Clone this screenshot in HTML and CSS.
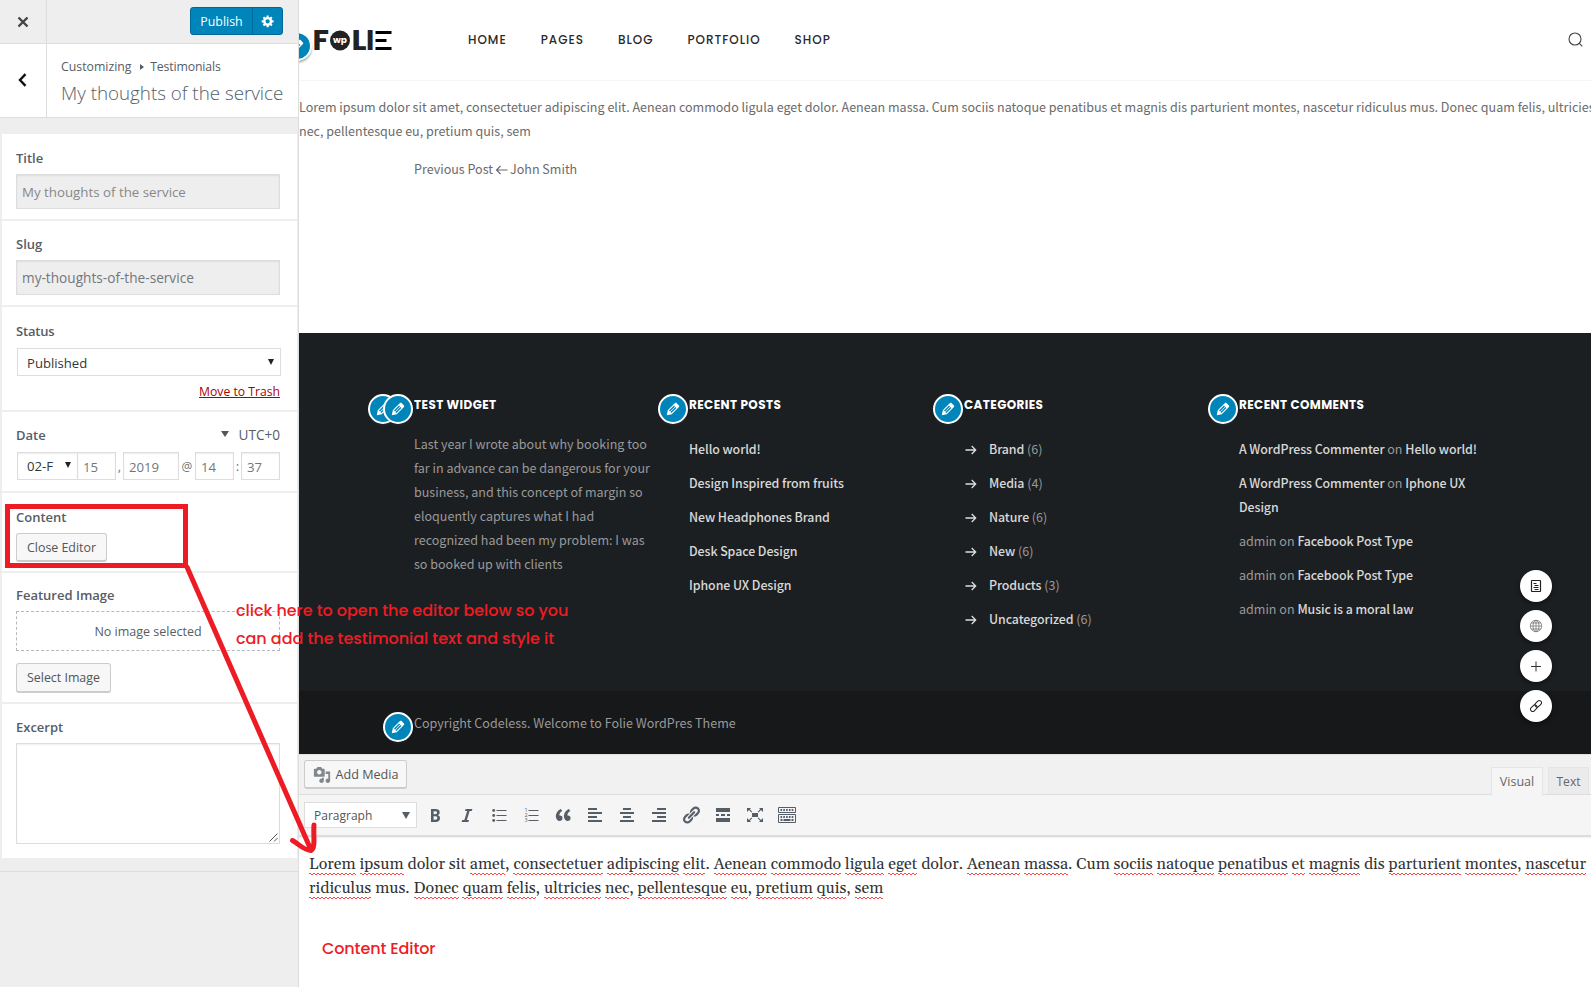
FILE: index.html
```html
<!DOCTYPE html>
<html lang="en">
<head>
<meta charset="utf-8">
<title>Customize: My thoughts of the service</title>
<link rel="stylesheet" href="styles.css">
</head>
<body>
<svg class="defs" width="0" height="0">
  <symbol id="pencil" viewBox="0 0 20 20"><path d="M13.89 3.39l2.71 2.72c.46.46.42 1.24.03 1.64l-8.01 8.02-5.56 1.16 1.16-5.58s7.6-7.63 7.99-8.03c.39-.39 1.22-.39 1.68.07zm-2.73 2.79l-5.59 5.61 1.11 1.11 5.54-5.65zm-2.97 8.23l5.58-5.6-1.07-1.08-5.59 5.6z"/></symbol>
  <symbol id="arrow" viewBox="0 0 12 10"><path d="M.5 5h10.2M6.7 1l4 4-4 4" fill="none" stroke="currentColor" stroke-width="1.3"/></symbol>
</svg>

<aside class="sidebar">
  <div class="topbar">
    <div class="close"><svg width="12" height="12" viewBox="0 0 12 12"><path d="M1.5 1.5l9 9M10.5 1.5l-9 9" stroke="#444" stroke-width="2.4"/></svg></div>
    <div class="publish"><span class="publish-label">Publish</span><span class="publish-cog"><svg width="14" height="14" viewBox="0 0 20 20" fill="#fff"><path fill-rule="evenodd" d="M18 12h-2.18c-.17.7-.44 1.35-.81 1.93l1.54 1.54-2.1 2.1-1.54-1.54c-.58.36-1.23.63-1.91.79V19H8v-2.18c-.68-.16-1.33-.43-1.91-.79l-1.54 1.54-2.12-2.12 1.54-1.54c-.36-.58-.63-1.23-.79-1.91H1V9.03h2.17c.16-.7.44-1.35.8-1.94L2.43 5.55l2.1-2.1 1.54 1.54c.58-.37 1.24-.64 1.93-.81V2h3v2.18c.68.16 1.33.43 1.91.79l1.54-1.54 2.12 2.12-1.54 1.54c.36.59.64 1.24.8 1.94H18V12zm-8.5 1.5c1.66 0 3-1.34 3-3s-1.34-3-3-3-3 1.34-3 3 1.34 3 3 3z"/></svg></span></div>
  </div>
  <div class="crumbs">
    <div class="back"><svg width="9" height="14" viewBox="0 0 9 14"><path d="M7.5 1.2L2 7l5.5 5.8" fill="none" stroke="#111" stroke-width="2.4"/></svg></div>
    <div class="crumb-text">
      <div class="path"><span>Customizing</span><i class="tri"></i><span class="t2">Testimonials</span></div>
      <div class="heading">My thoughts of the service</div>
    </div>
  </div>
  <div class="cards">
    <section class="card c-title"><label>Title</label><div class="field filled">My thoughts of the service</div></section>
    <section class="card c-slug"><label>Slug</label><div class="field filled slug">my-thoughts-of-the-service</div></section>
    <section class="card c-status"><label class="status">Status</label><div class="select"><span>Published</span><i class="caret"></i></div><div class="trash"><a>Move to Trash</a></div></section>
    <section class="card c-date">
      <div class="date-head"><label>Date</label><span class="utc"><i class="caret grey"></i>UTC+0</span></div>
      <div class="date-row"><span class="box mon">02-F<i class="caret"></i></span><span class="box day">15</span><span class="sep s1">,</span><span class="box year">2019</span><span class="sep s2">@</span><span class="box hh">14</span><span class="sep s3">:</span><span class="box hh">37</span></div>
    </section>
    <section class="card c-content"><label>Content</label><span class="btn b-close">Close Editor</span></section>
    <section class="card c-image"><label>Featured Image</label><div class="noimg">No image selected</div><span class="btn b-select">Select Image</span></section>
    <section class="card c-excerpt"><label>Excerpt</label><div class="area"><svg width="9" height="9" viewBox="0 0 9 9"><path d="M.5 8.5l8-8M5 8.5l3.5-3.5" stroke="#555" stroke-width="1"/></svg></div></section>
  </div>
  <div class="side-rest"></div>
</aside>

<main class="main">
  <header class="site-head">
    <span class="badge bd-logo"><svg><use href="#pencil"/></svg></span>
    <svg class="logo" width="80" height="22" viewBox="0 0 80 22">
      <g class="logo-text"><text x="-.5" y="20.3" textLength="16.500" lengthAdjust="spacingAndGlyphs">F</text><text x="38.5" y="20.3" textLength="15" lengthAdjust="spacingAndGlyphs">L</text><text x="53" y="20.3">I</text></g>
      <circle cx="27" cy="10.5" r="10" fill="#222"/>
      <text class="logo-wp" x="27" y="13.2" text-anchor="middle">wp</text>
      <path d="M62.500 .9h16v3h-16zM62.500 8.900h11v3h-11zM62.500 17h16v3h-16z" fill="#000"/>
    </svg>
    <nav class="nav"><a>HOME</a><a>PAGES</a><a>BLOG</a><a>PORTFOLIO</a><a>SHOP</a></nav>
    <svg class="search" width="15" height="15" viewBox="0 0 15 15"><circle cx="7" cy="7" r="6" fill="none" stroke="#444" stroke-width="1.100"/><path d="M11.300 11.300l3 3" stroke="#444" stroke-width="1.100"/></svg>
  </header>
  <article class="post">
    <p>Lorem ipsum dolor sit amet, consectetuer adipiscing elit. Aenean commodo ligula eget dolor. Aenean massa. Cum sociis natoque penatibus et magnis dis parturient montes, nascetur ridiculus mus. Donec quam felis, ultricies<br>nec, pellentesque eu, pretium quis, sem</p>
    <div class="prev"><span>Previous Post</span><svg width="13" height="10" viewBox="0 0 13 10"><path d="M12.500 5H1.500M5.500 1l-4 4 4 4" fill="none" stroke="#666" stroke-width="1.100"/></svg><span>John Smith</span></div>
  </article>

  <footer class="foot">
    <div class="col col1">
      <span class="badge b-a"><svg><use href="#pencil"/></svg></span><span class="badge b-b"><svg><use href="#pencil"/></svg></span>
      <h4>TEST WIDGET</h4>
      <p>Last year I wrote about why booking too<br>far in advance can be dangerous for your<br>business, and this concept of margin so<br>eloquently captures what I had<br>recognized had been my problem: I was<br>so booked up with clients</p>
    </div>
    <div class="col col2">
      <span class="badge b-b"><svg><use href="#pencil"/></svg></span>
      <h4>RECENT POSTS</h4>
      <ul><li><b>Hello world!</b></li><li><b>Design Inspired from fruits</b></li><li><b>New Headphones Brand</b></li><li><b>Desk Space Design</b></li><li><b>Iphone UX Design</b></li></ul>
    </div>
    <div class="col col3">
      <span class="badge b-b"><svg><use href="#pencil"/></svg></span>
      <h4>CATEGORIES</h4>
      <ul><li><svg class="ar"><use href="#arrow"/></svg><b>Brand</b> (6)</li><li><svg class="ar"><use href="#arrow"/></svg><b>Media</b> (4)</li><li><svg class="ar"><use href="#arrow"/></svg><b>Nature</b> (6)</li><li><svg class="ar"><use href="#arrow"/></svg><b>New</b> (6)</li><li><svg class="ar"><use href="#arrow"/></svg><b>Products</b> (3)</li><li><svg class="ar"><use href="#arrow"/></svg><b>Uncategorized</b> (6)</li></ul>
    </div>
    <div class="col col4">
      <span class="badge b-b"><svg><use href="#pencil"/></svg></span>
      <h4>RECENT COMMENTS</h4>
      <ul><li><b>A WordPress Commenter</b> on <b>Hello world!</b></li><li><b>A WordPress Commenter</b> on <b>Iphone UX<br>Design</b></li><li>admin on <b>Facebook Post Type</b></li><li>admin on <b>Facebook Post Type</b></li><li>admin on <b>Music is a moral law</b></li></ul>
    </div>
  </footer>
  <div class="copy"><span class="badge b-c"><svg><use href="#pencil"/></svg></span>Copyright Codeless. Welcome to Folie WordPres Theme</div>

  <div class="fabs">
    <span class="fab"><svg width="12" height="14" viewBox="0 0 12 14" fill="none" stroke="#222"><rect x="1.500" y="1.500" width="9" height="11" rx=".5" stroke-width="1.200"/><path d="M3.500 4.500h3M4.500 6.500h4M3.500 8.500h5M4.500 10.500h4"/></svg></span>
    <span class="fab"><svg width="14" height="14" viewBox="0 0 14 14" fill="none" stroke="#777" stroke-width=".8"><circle cx="7" cy="7" r="5.700"/><ellipse cx="7" cy="7" rx="3" ry="5.700"/><path d="M7 1.300v11.400M1.300 7h11.400M2 4h10M2 10h10"/></svg></span>
    <span class="fab"><svg width="12" height="12" viewBox="0 0 12 12"><path d="M1 6.500h10M6 1.500v10" stroke="#333"/></svg></span>
    <span class="fab"><svg width="14" height="14" viewBox="0 0 14 14" fill="none" stroke="#222" stroke-width="1"><rect x="-3.700" y="-2.200" width="7.400" height="4.400" rx="2.200" transform="translate(9.200 4.800) rotate(-45)"/><rect x="-3.700" y="-2.200" width="7.400" height="4.400" rx="2.200" transform="translate(4.800 9.200) rotate(-45)"/></svg></span>
  </div>

  <section class="editor">
    <div class="ed-top">
      <span class="btn media"><svg width="18" height="18" viewBox="0 0 20 20" fill="#82878c"><path fill-rule="evenodd" d="M13 11V4c0-.55-.45-1-1-1h-1.670L9 1H5L3.670 3H2c-.55 0-1 .45-1 1v7c0 .55.45 1 1 1h10c.55 0 1-.45 1-1zM7 4.500c1.380 0 2.500 1.120 2.500 2.500S8.380 9.500 7 9.500 4.500 8.380 4.500 7 5.620 4.500 7 4.500zM14 6h5v10.500c0 1.380-1.120 2.500-2.500 2.500S14 17.880 14 16.500s1.120-2.500 2.500-2.500c.17 0 .34.02.5.05V9h-3V6zm-4 8.050V13h2v3.500c0 1.380-1.120 2.500-2.500 2.500S7 17.880 7 16.500 8.120 14 9.500 14c.17 0 .34.02.5.05z"/></svg>Add Media</span>
      <div class="tabs"><span class="tab on">Visual</span><span class="tab">Text</span></div>
    </div>
    <div class="toolbar">
      <span class="para">Paragraph<i class="caret big"></i></span>
      <div class="tools">
        <svg viewBox="0 0 20 20"><path fill-rule="evenodd" d="M6 4v13h4.540c1.370 0 2.460-.33 3.260-1 .8-.66 1.200-1.580 1.200-2.770 0-.84-.17-1.510-.51-2.010s-.9-.85-1.670-1.030v-.09c.57-.1 1.020-.4 1.360-.9s.51-1.130.51-1.910c0-1.140-.39-1.980-1.170-2.500C12.750 4.260 11.500 4 9.780 4H6zm2.570 5.150V6.260h1.360c.73 0 1.270.11 1.610.32.34.22.51.58.51 1.070 0 .54-.16.92-.47 1.150s-.82.35-1.510.35h-1.500zm0 2.190h1.600c1.440 0 2.160.53 2.160 1.610 0 .6-.17 1.050-.51 1.340s-.86.43-1.570.43H8.570v-3.380z"/></svg>
        <svg viewBox="0 0 20 20"><path d="M14.780 6h-2.130l-2.800 9h2.120l-.62 2H4.600l.62-2h2.140l2.800-9H8.030l.62-2h6.750z"/></svg>
        <svg viewBox="0 0 20 20"><path d="M7.500 5h10v1h-10zM7.500 10h10v1h-10zM7.500 15h10v1h-10z"/><circle cx="4.700" cy="5.500" r="1.400"/><circle cx="4.700" cy="10.500" r="1.400"/><circle cx="4.700" cy="15.500" r="1.400"/></svg>
        <svg viewBox="0 0 20 20"><path d="M7.500 5h10v1h-10zM7.500 10h10v1h-10zM7.500 15h10v1h-10z"/><g class="nums"><text x="3.500" y="7">1</text><text x="3.500" y="12">2</text><text x="3.500" y="17.200">3</text></g></svg>
        <svg viewBox="0 0 20 20"><path d="M9.490 13.220c0-.74-.2-1.380-.61-1.900-.62-.78-1.830-.88-2.530-.72-.29-1.650 1.110-3.750 2.920-4.650L7.880 4c-2.730 1.300-5.420 4.280-4.960 8.050C3.210 14.430 4.590 16 6.540 16c.85 0 1.560-.25 2.120-.75s.83-1.180.83-2.030zm8.050 0c0-.74-.2-1.380-.61-1.900-.63-.78-1.830-.88-2.530-.72-.29-1.650 1.110-3.750 2.920-4.650L15.930 4c-2.730 1.300-5.410 4.280-4.950 8.050.29 2.380 1.660 3.950 3.610 3.950.85 0 1.560-.25 2.120-.75s.83-1.180.83-2.030z"/></svg>
        <svg viewBox="0 0 20 20"><path d="M12 5V3H3v2h9zm5 4V7H3v2h14zm-5 4v-2H3v2h9zm5 4v-2H3v2h14z"/></svg>
        <svg viewBox="0 0 20 20"><path d="M14 5V3H6v2h8zm3 4V7H3v2h14zm-3 4v-2H6v2h8zm3 4v-2H3v2h14z"/></svg>
        <svg viewBox="0 0 20 20"><path d="M17 5V3H8v2h9zm0 4V7H3v2h14zm0 4v-2H8v2h9zm0 4v-2H3v2h14z"/></svg>
        <svg viewBox="0 0 20 20"><path d="M17.740 2.760c1.680 1.690 1.680 4.410 0 6.100l-1.530 1.520c-1.120 1.120-2.700 1.470-4.140 1.090l2.620-2.610.76-.77.76-.76c.84-.84.84-2.200 0-3.040-.84-.85-2.200-.85-3.040 0l-.77.76-3.380 3.380c-.37-1.440-.02-3.020 1.100-4.140l1.520-1.530c1.690-1.680 4.420-1.680 6.100 0zM8.590 13.430l5.340-5.340c.42-.42.42-1.100 0-1.520-.44-.43-1.130-.39-1.530 0l-5.330 5.340c-.42.42-.42 1.100 0 1.520.44.43 1.130.39 1.520 0zm-.76 2.290l4.140-4.150c.38 1.440.03 3.020-1.090 4.140l-1.520 1.530c-1.690 1.680-4.410 1.680-6.100 0-1.680-1.680-1.680-4.420 0-6.100l1.530-1.520c1.120-1.120 2.700-1.470 4.140-1.100l-4.140 4.150c-.85.84-.85 2.200 0 3.050.84.84 2.200.84 3.040 0z"/></svg>
        <svg viewBox="0 0 20 20"><path d="M17 7V3H3v4h14zM6 11V9H3v2h3zm6 0V9H8v2h4zm5 0V9h-3v2h3zm0 6v-4H3v4h14z"/></svg>
        <svg viewBox="0 0 20 20"><path d="M7 8h6v4H7zM2 3h4L4.800 4.200 7.300 6.700l-.8.8L4 5 2 7zM18 3v4l-2-2-2.500 2.500-.8-.8 2.500-2.500L14 3zM2 17v-4l2 2 2.500-2.500.8.8-2.500 2.500L6 17zM18 17h-4l1.200-1.200-2.500-2.500.8-.8L16 15l2-2z"/></svg>
        <svg viewBox="0 0 20 20"><path d="M1.500 2.500h17v5h-17zM1.500 9.500h17v8h-17z" fill="none" stroke="#555d66"/><path d="M3.500 5h13M3.500 12h13" fill="none" stroke="#555d66" stroke-width="2" stroke-dasharray="1.600 1.200"/><path d="M3.500 15h2M6.500 15h7M14.500 15h2" stroke="#555d66" stroke-width="2"/></svg>
      </div>
    </div>
    <div class="ed-body">
      <p><u>Lorem</u> <u>ipsum</u> dolor sit <u>amet</u>, <u>consectetuer</u> <u>adipiscing</u> <u>elit</u>. <u>Aenean</u> <u>commodo</u> <u>ligula</u> <u>eget</u> dolor. <u>Aenean</u> <u>massa</u>. Cum <u>sociis</u> <u>natoque</u> <u>penatibus</u> <u>et</u> <u>magnis</u> dis <u>parturient</u> <u>montes</u>, <u>nascetur</u><br><u>ridiculus</u> mus. <u>Donec</u> <u>quam</u> <u>felis</u>, <u>ultricies</u> <u>nec</u>, <u>pellentesque</u> <u>eu</u>, <u>pretium</u> <u>quis</u>, <u>sem</u></p>
      <div class="note-editor">Content Editor</div>
    </div>
  </section>
</main>

<div class="annot">click here to open the editor below so you<br>can add the testimonial text and style it</div>
<svg class="marks" width="330" height="360" viewBox="0 0 330 360" fill="none" stroke="#ed1c24" stroke-width="5">
  <rect x="7.500" y="6.500" width="178" height="59"/>
  <path d="M187 67L311 350M292.500 340.500C299 344 303 350 311 350.500C316 348 313 335 314 325" stroke-linecap="round"/>
</svg>
</body>
</html>
```
FILE: styles.css
```css
* { box-sizing: border-box; }
body { margin: 0; width: 1591px; height: 987px; overflow: hidden; display: flex; position: relative; background: #fff; font: 12.2px/16px "Open Sans", sans-serif; color: #555d66; }
.defs { position: absolute; }
i { display: inline-block; }

.sidebar { width: 299px; height: 987px; flex: none; background: #eee; border-right: 1px solid #ddd; display: flex; flex-direction: column; }
.topbar { height: 44px; border-bottom: 1px solid #ddd; display: flex; justify-content: space-between; padding-right: 15px; }
.close { width: 47px; border-right: 1px solid #ddd; display: flex; align-items: center; justify-content: center; padding-right: 1px; }
.publish { margin-top: 7px; width: 93px; height: 28px; display: flex; background: #0085ba; border: 1px solid #006799; border-radius: 3px; color: #fff; }
.publish-label { width: 62px; line-height: 28px; text-align: center; border-right: 1px solid #006799; font-size: 12.400px; }
.publish-cog { flex: 1; display: flex; align-items: center; justify-content: center; }
.crumbs { height: 74px; background: #fff; border-bottom: 1px solid #ddd; display: flex; }
.back { width: 47px; border-right: 1px solid #ddd; display: flex; align-items: center; justify-content: center; padding: 0 1px 1px 0; }
.crumb-text { padding: 14px 0 0 14px; white-space: nowrap; }
.path { display: flex; align-items: center; line-height: 18px; font-size: 12.300px; }
.path .t2 { letter-spacing: -.15px; }
.tri { border: 3px solid transparent; border-left: 4.500px solid #555d66; border-right: 0; margin: 0 6.700px 0 8px; }
.heading { font-size: 18.780px; font-weight: 300; line-height: 26px; margin-top: 4px; }

.cards { margin: 16px 1px 0 2px; display: flex; flex-direction: column; gap: 2px; }
.card { background: #fff; padding: 0 16px 0 14px; display: flex; flex-direction: column; align-items: flex-start; }
.card label { font-size: 13px; font-weight: 600; line-height: 20px; }
.status { letter-spacing: -.2px; }
.c-title { height: 85px; padding-top: 14px; }
.c-slug { height: 84px; padding-top: 13px; }
.c-status { height: 103px; padding-top: 14px; }
.c-date { height: 79px; padding-top: 13px; }
.c-content { height: 78px; padding-top: 14px; }
.c-image { height: 129px; padding-top: 12px; }
.c-excerpt { height: 154px; padding-top: 13px; }
.field { width: 264px; height: 35px; margin-top: 6px; border: 1px solid #ddd; line-height: 34px; padding-left: 5px; font-size: 13.300px; box-shadow: inset 0 1px 2px rgba(0,0,0,.07); }
.filled { background: #eee; color: #888; }
.slug { font-size: 13.650px; color: #72777c; }
.select { width: 264px; height: 28px; margin: 7px 0 0 1px; border: 1px solid #ddd; display: flex; align-items: center; justify-content: space-between; padding: 2px 6px 0 9px; font-size: 13.100px; color: #32373c; }
.caret { border: 3.500px solid transparent; border-top: 6px solid #222; border-bottom: 0; position: relative; top: -1px; }
.caret.grey { border-width: 6px 4px 0; border-top-color: #555; margin-right: 9px; top: -3px; }
.caret.big { border-width: 7px 4.500px 0; border-top-color: #555d66; top: 0; }
.trash { width: 264px; text-align: right; margin-top: 7px; line-height: 18px; color: #a00; text-decoration: underline; }
.date-head { width: 264px; display: flex; justify-content: space-between; line-height: 20px; }
.utc { font-size: 13.600px; }
.date-row { display: flex; margin: 7px 0 0 1px; height: 28px; font-size: 13.200px; line-height: 29px; color: #72777c; white-space: nowrap; }
.box { border: 1px solid #ddd; padding-left: 5px; box-shadow: inset 0 1px 2px rgba(0,0,0,.07); }
.mon { width: 60px; padding: 0 6px 0 9px; color: #32373c; display: flex; align-items: center; justify-content: space-between; border-right: 0; }
.day { width: 39px; }
.year { width: 56px; }
.hh { width: 39px; }
.sep { text-align: center; }
.s1 { width: 7px; } .s2 { width: 16px; font-size: 12px; } .s3 { width: 7px; }
.btn { height: 28px; border: 1px solid #ccc; border-bottom-width: 2px; border-radius: 3px; background: #f7f7f7; color: #555; line-height: 27px; text-align: center; font-size: 12.400px; }
.b-close { width: 91px; margin-top: 6px; height: 29px; }
.b-select { width: 95px; margin-top: 12px; height: 30px; }
.noimg { width: 264px; height: 40px; margin-top: 6px; border: 1px dashed #b4b9be; text-align: center; line-height: 40px; font-size: 12.500px; }
.area { width: 264px; height: 101px; margin-top: 6px; border: 1px solid #ddd; box-shadow: inset 0 1px 2px rgba(0,0,0,.07); display: flex; align-items: flex-end; justify-content: flex-end; padding: 1px; }
.side-rest { margin-top: 13px; border-top: 1px solid #ddd; flex: 1; }

.main { width: 1292px; flex: none; height: 987px; position: relative; overflow: hidden; display: flex; flex-direction: column; font-family: "Noto Sans CJK SC", sans-serif; font-size: 12.540px; color: #6b6b6b; }
.site-head { height: 81px; border-bottom: 1px solid #f6f6f6; display: flex; align-items: center; position: relative; flex: none; }
.logo { margin: 1px 0 0 14px; overflow: visible; }
.logo-text { font: 700 28px Poppins, sans-serif; fill: #222; }
.logo-wp { font: 700 9px Poppins, sans-serif; fill: #fff; }
.nav { display: flex; gap: 34px; margin-left: 75px; font: 500 12px/20px Poppins, sans-serif; letter-spacing: .98px; color: #2a2a2a; }
.search { margin: 0 8px 1px auto; }
.post { height: 252px; flex: none; white-space: nowrap; line-height: 24px; padding-top: 14px; }
.post p { margin: 0; }
.prev { margin: 14px 0 0 115px; display: flex; align-items: center; gap: 2px; line-height: 24px; }
.prev svg { position: relative; top: 1px; }

.badge { position: absolute; width: 30px; height: 30px; border: 2px solid #fff; border-radius: 50%; background: #0085ba; color: #fff; display: flex; align-items: center; justify-content: center; box-shadow: 0 2px 1px rgba(46,68,83,.15); }
.badge svg { width: 18px; height: 18px; fill: #fff; }
.bd-logo { left: -17px; top: 31px; box-shadow: 0 2px 2px rgba(46,68,83,.4); }
.b-b { left: -31px; top: 61px; }
.b-a { left: -46px; top: 61px; }
.b-c { left: 84px; top: 21px; }

.foot { height: 358px; flex: none; background: #1c1f22; display: grid; grid-template-columns: 275px 275px 275px 1fr; padding-left: 115px; color: #999; }
.col { position: relative; white-space: nowrap; line-height: 24px; }
.col h4 { margin: 62px 0 0; font: 700 12px/20px Poppins, sans-serif; letter-spacing: .4px; color: #fff; }
.col p { margin: 17px 0 0; }
.col ul { list-style: none; margin: 22px 0 0; padding: 0; }
.col li { margin-bottom: 10px; }
.col b { font-weight: 500; color: #d8d8d8; letter-spacing: -.08px; font-size: 12.400px; }
.ar { width: 12px; height: 10px; color: #ddd; margin: 0 12px 0 1px; vertical-align: -1px; }
.copy { height: 63px; flex: none; background: #17181a; position: relative; padding-left: 115px; line-height: 64px; color: #999; }

.fabs { position: absolute; left: 1221px; top: 570px; display: flex; flex-direction: column; gap: 8px; }
.fab { width: 32px; height: 32px; border-radius: 50%; background: #fff; display: flex; align-items: center; justify-content: center; box-shadow: 0 2px 5px rgba(0,0,0,.5); }

.editor { flex: 1; display: flex; flex-direction: column; font: 12.200px/16px "Open Sans", sans-serif; color: #555; }
.ed-top { height: 40px; background: #f1f1f1; border-top: 1px solid #e0e0e0; display: flex; justify-content: space-between; padding: 5px 2px 0 5px; }
.media { width: 103px; display: flex; align-items: center; justify-content: center; gap: 5px; font-size: 12.600px; line-height: 28px; height: 29px; padding-top: 1px; }
.tabs { display: flex; gap: 5px; align-items: flex-end; height: 35px; }
.tab { height: 28px; border: 1px solid #e5e5e5; border-bottom: 0; background: #ebebeb; color: #666; line-height: 28px; text-align: center; width: 41px; font-size: 12.100px; }
.tab.on { width: 52px; background: #f5f5f5; height: 29px; margin-bottom: -1px; position: relative; z-index: 1; font-size: 12.500px; }
.toolbar { height: 43px; background: #f5f5f5; border-top: 1px solid #ddd; border-bottom: 2px solid #ddd; display: flex; align-items: center; padding: 0 0 1px 5px; flex: none; }
.para { width: 113px; height: 26px; border: 1px solid #ddd; background: #fff; display: flex; align-items: center; justify-content: space-between; padding: 2px 6px 0 9px; font-size: 12px; }
.tools { display: flex; gap: 12px; margin-left: 8px; }
.tools svg { width: 20px; height: 20px; fill: #555d66; }
.nums { font: 5.500px "Open Sans", sans-serif; }
.ed-body { background: #fff; flex: 1; padding: 15px 0 0 10px; box-shadow: inset 0 1px 1px rgba(0,0,0,.06); }
.ed-body p { margin: 0; font: 16px/24px Gelasio, serif; color: #333; white-space: nowrap; }
.ed-body u { text-decoration: none; padding-bottom: 1px; background: linear-gradient(90deg, #f44 50%, transparent 50%) 0 calc(100% - 1px) / 4px 1px repeat-x, linear-gradient(90deg, transparent 50%, #f44 50%) 0 100% / 4px 1px repeat-x; }
.note-editor { margin: 37px 0 0 13px; font: 500 16px/24px Poppins, sans-serif; letter-spacing: -.12px; color: #ed1c24; }

.annot { position: absolute; left: 236px; top: 597px; font: 500 16px/28px Poppins, sans-serif; letter-spacing: -.04px; color: #ed1c24; white-space: nowrap; }
.marks { position: absolute; left: 0; top: 500px; }
```
